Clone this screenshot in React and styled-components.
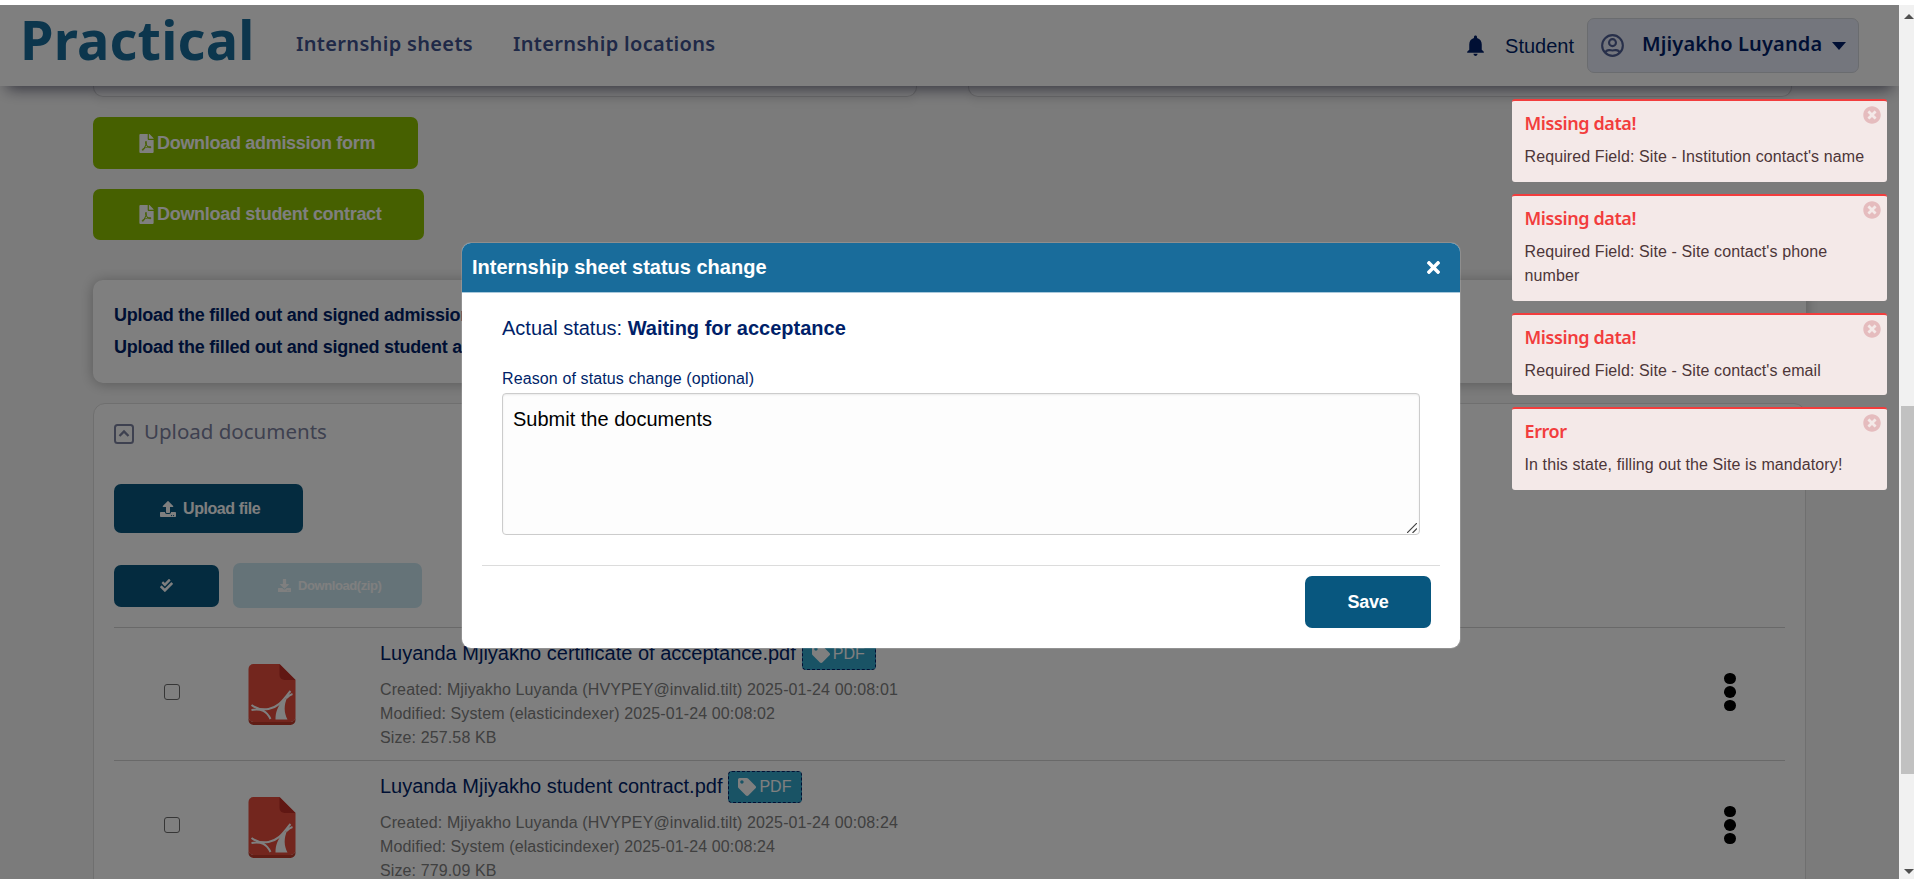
import React from "react";
import styled, { createGlobalStyle } from "styled-components";
import { FaFilePdf, FaUpload, FaDownload, FaCheckDouble, FaTag, FaTimes, FaTimesCircle } from "react-icons/fa";
import { MdNotifications } from "react-icons/md";

const sans = `"Liberation Sans", Arial, sans-serif`;
const display = `"Noto Sans", "Open Sans", sans-serif`;

const GlobalStyle = createGlobalStyle`
  *, *::before, *::after { box-sizing: border-box; }
  html, body { margin: 0; height: 100%; overflow: hidden; background: #fff; }
  body { font-family: ${sans}; color: #001f69; }
  button { font-family: inherit; border: 0; }
  svg { display: block; flex: none; }
`;

const Screen = styled.div`
  display: grid;
  grid-template-columns: 1899px 15px;
  height: 874px;
  margin-top: 5px;
  overflow: hidden;
  position: relative;
`;

const Page = styled.div`
  display: flex;
  flex-direction: column;
  background: #f7f7f7;
  overflow: hidden;
  height: 874px;
`;

const Header = styled.header`
  display: flex;
  align-items: flex-start;
  flex: none;
  height: 81px;
  padding-left: 20px;
  padding-right: 40px;
  background: #fff;
  box-shadow: 0 10px 14px -7px rgba(15, 15, 45, 0.6);
  z-index: 1;
`;

const Logo = styled.div`
  width: 276px;
  font: 700 54px/68px ${display};
  letter-spacing: 0.2px;
  color: #196c9b;
`;

const NavLink = styled.a`
  margin-top: 23px;
  margin-right: 40px;
  font: 600 20px/32px ${display};
  letter-spacing: 0.33px;
  color: #3f528f;
  white-space: nowrap;
`;

const UserArea = styled.div`
  display: flex;
  align-items: center;
  height: 55px;
  margin-top: 13px;
  margin-left: auto;
  font-size: 20px;
`;

const Role = styled.span`
  margin: 1px 13px 0 17px;
`;

const UserButton = styled.button`
  display: flex;
  align-items: center;
  width: 272px;
  height: 55px;
  padding: 0 0 0 13px;
  border: 1px solid #d5d8df;
  border-radius: 7px;
  background: #e9edfa;
  color: #001f69;
`;

const UserName = styled.span`
  width: 180px;
  margin: 0 10px 4px 18px;
  font: 600 20px/28px ${display};
  letter-spacing: 0.15px;
  white-space: nowrap;
  text-align: left;
`;

const TopPanels = styled.div`
  display: flex;
  gap: 51px;
  flex: none;
  height: 11px;
  padding-left: 93px;
`;

const TopPanel = styled.div`
  width: 824px;
  border: 1px solid #d4d4d4;
  border-top: 0;
  border-radius: 0 0 10px 10px;
  background: #f9f9f9;
  box-shadow: 0 5px 10px rgba(0, 0, 0, 0.05);
`;

const Downloads = styled.div`
  display: flex;
  flex-direction: column;
  align-items: flex-start;
  gap: 20px;
  padding: 20px 0 0 93px;
  flex: none;
  height: 183px;
`;

const DownloadButton = styled.button`
  display: flex;
  align-items: center;
  gap: 1px;
  width: ${(p) => p.$width};
  height: ${(p) => p.$height};
  padding: 0 0 0 44px;
  border-radius: 7px;
  background: #8cc000;
  color: #fff;
  font-size: 18px;
  font-weight: 700;
  letter-spacing: -0.3px;
  white-space: nowrap;
`;

const Notice = styled.section`
  flex: none;
  width: 1713px;
  height: 103px;
  margin-left: 93px;
  padding: 19px 21px;
  border-radius: 10px;
  background: #fff;
  box-shadow: 0 1px 14px rgba(0, 0, 0, 0.28);
  font-size: 18px;
  font-weight: 700;
  letter-spacing: -0.24px;
  line-height: 32px;
`;

const NoticeLine = styled.p`
  margin: 0;
`;

const Documents = styled.section`
  flex: none;
  width: 1713px;
  height: 500px;
  margin: 20px 0 0 93px;
  padding: 0 20px;
  border: 1px solid #dedede;
  border-radius: 12px 12px 0 0;
  background: #fff;
`;

const DocumentsTitle = styled.h2`
  display: flex;
  align-items: center;
  gap: 10px;
  height: 30px;
  margin: 15px 0 0;
  font: 400 20.5px/30px ${display};
  color: #7c82a0;
`;

const TitleText = styled.span`
  margin-top: -6px;
`;

const Toolbar = styled.div`
  display: flex;
  align-items: center;
  gap: 14px;
  margin-top: ${(p) => p.$top};
  height: ${(p) => p.$height};
`;

const FileList = styled.div`
  margin-top: 19px;
`;

const ActionButton = styled.button`
  display: flex;
  align-items: center;
  gap: ${(p) => p.$gap || "7px"};
  width: ${(p) => p.$width};
  height: ${(p) => p.$height};
  padding: 0 0 0 ${(p) => p.$indent || "46px"};
  border-radius: 7px;
  background: ${(p) => (p.$muted ? "#cbe7f1" : "#08577f")};
  color: #fff;
  font-size: ${(p) => p.$size || "16px"};
  font-weight: 700;
  letter-spacing: -0.42px;
  white-space: nowrap;
`;

const FileRow = styled.article`
  display: grid;
  grid-template-columns: 50px 84px 132px 1fr 60px;
  height: 133px;
  border-top: 1px solid #d2d2d2;
`;

const Check = styled.span`
  justify-self: end;
  width: 16px;
  height: 16px;
  margin: 56px -16px 0 0;
  border: 1px solid #6d6d6d;
  border-radius: 3px;
  background: #fff;
`;

const FileIcon = styled.div`
  grid-column: 3;
  padding-top: 36px;
`;

const FileName = styled.div`
  display: flex;
  align-items: center;
  gap: 6px;
  height: 32px;
  margin-top: 9px;
  font-size: 20px;
  white-space: nowrap;
`;

const Badge = styled.span`
  display: flex;
  align-items: center;
  gap: 3px;
  height: 32px;
  margin-top: 2px;
  padding: 0 10px 0 9px;
  border: 1px dashed #001f69;
  border-radius: 4px;
  background: #33a6ca;
  color: #fff;
  font-size: 16px;
`;

const Meta = styled.div`
  margin-top: 9px;
  font-size: 16px;
  line-height: 24px;
  letter-spacing: 0.12px;
  color: #808080;
`;

const Dots = styled.div`
  display: flex;
  flex-direction: column;
  gap: 2px;
  padding-top: 44.5px;
  margin-left: -1px;
`;

const Dot = styled.i`
  width: 12px;
  height: 11.6px;
  border-radius: 50%;
  background: #000;
`;

const Scrollbar = styled.div`
  display: flex;
  flex-direction: column;
  padding-left: 2px;
  background: #f1f1f1;
  overflow: hidden;
  z-index: 3;
`;

const Thumb = styled.div`
  width: 13px;
  height: 368px;
  margin-top: 387px;
  background: #c1c1c1;
`;

const ScrollArrow = styled.i`
  width: 0;
  height: 0;
  margin: ${(p) => (p.$down ? "95px 0 0 3px" : "9px 0 0 3px")};
  border: 5px solid transparent;
  border-width: ${(p) => (p.$down ? "5px 5px 0" : "0 5px 5px")};
  border-top-color: ${(p) => (p.$down ? "#505050" : "transparent")};
  border-bottom-color: ${(p) => (p.$down ? "transparent" : "#505050")};
`;

const Overlay = styled.div`
  position: absolute;
  inset: 0 15px 0 0;
  z-index: 2;
  background: rgba(0, 0, 0, 0.5);
`;

const Dialog = styled.div`
  position: absolute;
  left: 462px;
  top: 238px;
  width: 998px;
  height: 405px;
  border-radius: 9px;
  background: #fff;
  overflow: hidden;
  box-shadow: 0 0 0 1px rgba(255, 255, 255, 0.15);
`;

const DialogHeader = styled.div`
  display: flex;
  align-items: center;
  justify-content: space-between;
  height: 50px;
  padding: 0 17px 0 10px;
  background: #196c9b;
  color: #fff;
  font-size: 20px;
  font-weight: 700;
  border-bottom: 1px solid #a9c9dc;
`;

const DialogBody = styled.div`
  display: flex;
  flex-direction: column;
  margin: 0 20px;
  padding: 23px 20px 0;
  height: 273px;
  border-bottom: 1px solid #dcdcdc;
`;

const Status = styled.div`
  font-size: 20px;
  line-height: 24px;
`;

const Label = styled.label`
  margin-top: 27px;
  font-size: 16px;
  line-height: 24px;
  letter-spacing: 0.12px;
`;

const ReasonField = styled.div`
  position: relative;
  width: 918px;
  height: 142px;
  margin-top: 2px;
`;

const Reason = styled.textarea`
  display: block;
  width: 100%;
  height: 100%;
  padding: 11px 10px;
  border: 1px solid #ccc;
  border-radius: 4px;
  background: #fdfdfd;
  box-shadow: inset 0 1px 2px rgba(0, 0, 0, 0.08);
  font: 20px/28px ${sans};
  color: #000;
  resize: none;
  outline: 0;
`;

const Grip = styled.svg`
  position: absolute;
  right: 3px;
  bottom: 2px;
`;

const DialogFooter = styled.div`
  display: flex;
  justify-content: flex-end;
  padding: 10px 29px 0 0;
`;

const SaveButton = styled.button`
  width: 126px;
  height: 52px;
  border-radius: 7px;
  background: #08577f;
  color: #fff;
  font-size: 18px;
  font-weight: 700;
  letter-spacing: -0.2px;
`;

const Toasts = styled.div`
  position: absolute;
  left: 1512px;
  top: 94px;
  width: 375px;
  display: flex;
  flex-direction: column;
  gap: 12px;
`;

const Toast = styled.div`
  display: grid;
  grid-template-columns: 1fr 18px;
  padding: 5px 6px 12px 12.5px;
  border-top: 2px solid #f23d3d;
  border-radius: 3px;
  background: #f4e9e8;
  color: #4d3638;
  font-size: 16px;
  line-height: 24.5px;
  letter-spacing: 0.1px;
`;

const ToastTitle = styled.strong`
  height: 34px;
  padding-top: 4px;
  color: #f23d3d;
  font: 600 18px/26px ${display};
  letter-spacing: -0.4px;
`;

const ToastText = styled.div`
  margin-right: -12px;
  max-width: 350px;
  padding-top: 5px;
`;

const ToastClose = styled.span`
  color: #e5bcbe;
`;

const UserIcon = () => (
  <svg width="23" height="23" viewBox="0 0 24 24" fill="none" stroke="#4f5f94" strokeWidth="2.2">
    <circle cx="12" cy="12" r="10.800" />
    <circle cx="12" cy="9" r="3.600" />
    <path d="M4.500 19.500c.8-1.900 2.400-2.900 4.300-2.700 2.300.6 4.100.6 6.400 0 1.900-.2 3.500.8 4.300 2.700" />
  </svg>
);

const Caret = () => (
  <svg width="14" height="8" viewBox="0 0 14 8" fill="#001f69">
    <path d="M0 0h14L7 8z" />
  </svg>
);

const CollapseIcon = () => (
  <svg width="20" height="20" viewBox="0 0 20 20" fill="none" stroke="#7c82a0" strokeWidth="2">
    <rect x="1" y="1" width="18" height="18" rx="2.500" />
    <path d="M5.500 12l4.500-4.500 4.500 4.500" strokeWidth="2.300" />
  </svg>
);

const PdfDrawing = () => (
  <svg width="48" height="61" viewBox="-0.5 0 48 61">
    <path d="M0 53v3a5 5 0 0 0 5 5h37a5 5 0 0 0 5-5v-3a5 5 0 0 1-5 5H5a5 5 0 0 1-5-5z" fill="#c03a2b" />
    <path d="M5 0h26l16 16v37a5 5 0 0 1-5 5H5a5 5 0 0 1-5-5V5a5 5 0 0 1 5-5z" fill="#e64c3c" />
    <path d="M31 0l16 16H36a5 5 0 0 1-5-5z" fill="#c02f26" />
    <path d="M3 41c6 4.500 11 5 17 4C31 43 35 35 42 27M3 46c10-1.500 15 1 19 9M44 30c-2.500.7-4 2-6 4" fill="none" stroke="#fff" strokeWidth="2" />
    <path d="M34 37l5-4c-4 8-3.500 16 0 22.500H27C27 48 29 43 34 37z" fill="#fff" />
  </svg>
);

const files = [
  { name: "Luyanda Mjiyakho certificate of acceptance.pdf", created: "2025-01-24 00:08:01", modified: "2025-01-24 00:08:02", size: "257.58 KB" },
  { name: "Luyanda Mjiyakho student contract.pdf", created: "2025-01-24 00:08:24", modified: "2025-01-24 00:08:24", size: "779.09 KB" },
];

const messages = [
  { title: "Missing data!", text: "Required Field: Site - Institution contact's name" },
  { title: "Missing data!", text: "Required Field: Site - Site contact's phone number" },
  { title: "Missing data!", text: "Required Field: Site - Site contact's email" },
  { title: "Error", text: "In this state, filling out the Site is mandatory!" },
];

export default function App() {
  return (
    <>
      <GlobalStyle />
      <Screen>
        <Page>
          <Header>
            <Logo>Practical</Logo>
            <NavLink>Internship sheets</NavLink>
            <NavLink>Internship locations</NavLink>
            <UserArea>
              <MdNotifications size={25} />
              <Role>Student</Role>
              <UserButton>
                <UserIcon />
                <UserName>Mjiyakho Luyanda</UserName>
                <Caret />
              </UserButton>
            </UserArea>
          </Header>
          <TopPanels>
            <TopPanel />
            <TopPanel />
          </TopPanels>
          <Downloads>
            <DownloadButton $width="325px" $height="52px"><FaFilePdf size={19} />Download admission form</DownloadButton>
            <DownloadButton $width="331px" $height="51px"><FaFilePdf size={19} />Download student contract</DownloadButton>
          </Downloads>
          <Notice>
            <NoticeLine>Upload the filled out and signed admission</NoticeLine>
            <NoticeLine>Upload the filled out and signed student a</NoticeLine>
          </Notice>
          <Documents>
            <DocumentsTitle><CollapseIcon /><TitleText>Upload documents</TitleText></DocumentsTitle>
            <Toolbar $top="35px" $height="49px">
              <ActionButton $width="189px" $height="49px"><FaUpload size={16} />Upload file</ActionButton>
            </Toolbar>
            <Toolbar $top="30px" $height="45px">
              <ActionButton $width="105px" $height="42px"><FaCheckDouble size={13} /></ActionButton>
              <ActionButton $width="189px" $height="45px" $muted $size="13px" $indent="45px" $gap="7px"><FaDownload size={13} />Download(zip)</ActionButton>
            </Toolbar>
            <FileList>
              {files.map((f) => (
                <FileRow key={f.name}>
                  <Check />
                  <FileIcon><PdfDrawing /></FileIcon>
                  <div>
                    <FileName>{f.name}<Badge><FaTag size={18} />PDF</Badge></FileName>
                    <Meta>
                      <div>Created: Mjiyakho Luyanda (HVYPEY@invalid.tilt) {f.created}</div>
                      <div>Modified: System (elasticindexer) {f.modified}</div>
                      <div>Size: {f.size}</div>
                    </Meta>
                  </div>
                  <Dots><Dot /><Dot /><Dot /></Dots>
                </FileRow>
              ))}
            </FileList>
          </Documents>
        </Page>
        <Scrollbar>
          <ScrollArrow />
          <Thumb />
          <ScrollArrow $down />
        </Scrollbar>
        <Overlay>
          <Dialog>
            <DialogHeader>Internship sheet status change<FaTimes size={19} /></DialogHeader>
            <DialogBody>
              <Status>Actual status: <strong>Waiting for acceptance</strong></Status>
              <Label htmlFor="reason">Reason of status change (optional)</Label>
              <ReasonField>
                <Reason id="reason" defaultValue="Submit the documents" />
                <Grip width="10" height="10" viewBox="0 0 10 10" stroke="#444" strokeWidth="1.200">
                  <path d="M0 10L10 0M5.500 10L10 5.500" />
                </Grip>
              </ReasonField>
            </DialogBody>
            <DialogFooter><SaveButton>Save</SaveButton></DialogFooter>
          </Dialog>
          <Toasts>
            {messages.map((m) => (
              <Toast key={m.text}>
                <ToastTitle>{m.title}</ToastTitle>
                <ToastClose><FaTimesCircle size={18} /></ToastClose>
                <ToastText>{m.text}</ToastText>
              </Toast>
            ))}
          </Toasts>
        </Overlay>
      </Screen>
    </>
  );
}
